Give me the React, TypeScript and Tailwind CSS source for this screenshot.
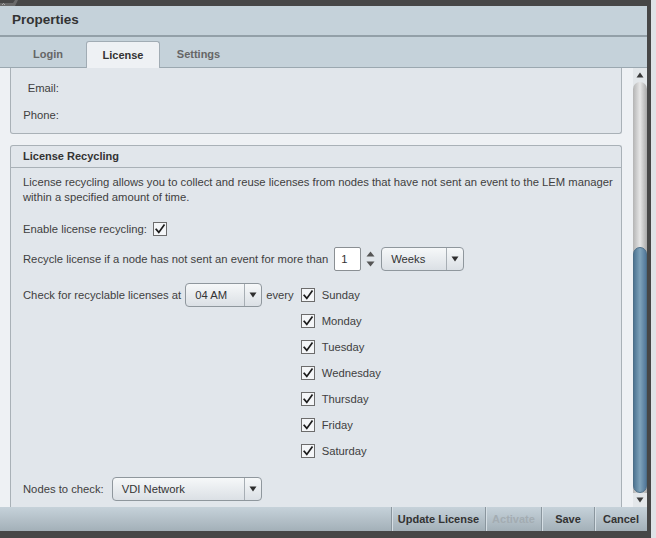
import React from "react";

const Check = () => (
  <div className="w-[14px] h-[14px] border border-[#6c6c6c] bg-[#f4f6f8] flex items-center justify-center shrink-0">
    <svg width="12" height="12" viewBox="0 0 12 12">
      <path d="M2.2 6.4 L4.8 9.4 L10 2.2" fill="none" stroke="#1c1c1c" strokeWidth="1.7" strokeLinecap="square" />
    </svg>
  </div>
);

const Arrow = () => (
  <svg width="8" height="6" viewBox="0 0 8 6">
    <path d="M0.5 0.5 L7.5 0.5 L4 5.5 Z" fill="#2e2e2e" />
  </svg>
);

const Select = ({ text, w }: { text: string; w: string }) => (
  <div
    className={`${w} h-[24px] shrink-0 flex rounded-[4px] border border-[#8f979d] bg-gradient-to-b from-[#f6f8f9] to-[#dbe0e5]`}
  >
    <div className="flex-1 flex items-center pl-[9px] text-[#333]">{text}</div>
    <div className="w-[17px] border-l border-[#a7aeb4] flex items-center justify-center">
      <Arrow />
    </div>
  </div>
);

const days = ["Sunday", "Monday", "Tuesday", "Wednesday", "Thursday", "Friday", "Saturday"];

export default function App() {
  return (
    <div className="w-[656px] h-[538px] bg-[#dfe3e7] flex font-['Liberation_Sans',Arial,sans-serif] text-[11.25px] text-[#404040]">
      <div className="w-[651px] h-full bg-[#474747] flex flex-col pt-[6px] pr-[4px] pb-[7px] relative">
        <svg className="absolute left-0 top-0" width="20" height="6" viewBox="0 0 20 6">
          <path d="M0 3 L13 3 L15 0 L18 0 L15 6 L0 6 Z" fill="#6a6a6a" />
          <path d="M2 5 L3.5 3.5 L5 5" fill="none" stroke="#bdbdbd" strokeWidth="0.8" />
        </svg>
        {/* header */}
        <div className="h-[31px] bg-[#c5d2da] border-b-2 border-[#93a0a8] flex items-center pl-[12px]">
          <span className="text-[13.5px] font-bold text-[#333]">Properties</span>
        </div>
        {/* tabs */}
        <div className="h-[31px] bg-[#c5d2da] border-b border-[#9ba8b0] flex items-end pl-[10px] text-[11px]">
          <div className="w-[76px] h-[27px] flex items-center justify-center font-bold text-[#666] -mb-px">Login</div>
          <div className="w-[74px] h-[27px] -mb-px flex items-center justify-center font-bold text-[#333] bg-[#eef1f4] border border-b-0 border-[#a1acb4] rounded-t-[3px] pt-[1px]">
            License
          </div>
          <div className="w-[77px] h-[27px] flex items-center justify-center font-bold text-[#666] -mb-px">Settings</div>
        </div>
        {/* content */}
        <div className="flex-1 flex bg-[#eef1f4] min-h-0">
          <div className="flex-1 flex flex-col pl-[10px] pr-[11px] min-h-0 overflow-hidden">
            <div className="h-[66px] shrink-0 bg-[#e1e6eb] border-x border-b border-[#a9b1b7] rounded-b-[3px] flex flex-col">
              <div className="h-[16px] mt-[12px] flex items-center">
                <span className="w-[48px] text-right">Email:</span>
              </div>
              <div className="h-[16px] mt-[11px] flex items-center">
                <span className="w-[48px] text-right">Phone:</span>
              </div>
            </div>
            <div className="mt-[11px] flex-1 bg-[#e1e6eb] border-x border-t border-[#a9b1b7] rounded-t-[3px] flex flex-col">
              <div className="h-[22px] shrink-0 border-b border-[#a9b1b7] flex items-center pl-[12px] font-bold text-[11px] text-[#333]">
                License Recycling
              </div>
              <div className="pl-[12px] flex flex-col">
                <p className="pt-[7px] leading-[15px] pr-[4px]">
                  License recycling allows you to collect and reuse licenses from nodes that have not sent an event to the LEM manager within a specified amount of time.
                </p>
                <div className="mt-[16px] h-[16px] flex items-center gap-[6px]">
                  <span>Enable license recycling:</span>
                  <Check />
                </div>
                <div className="mt-[10px] h-[24px] flex items-center">
                  <span>Recycle license if a node has not sent an event for more than</span>
                  <div className="ml-[6px] w-[27px] h-[24px] bg-white border border-[#8a8f93] rounded-[2px] flex items-center pl-[6px] text-[#333]">
                    1
                  </div>
                  <svg className="ml-[5px]" width="9" height="16" viewBox="0 0 9 16">
                    <path d="M0.5 5.5 L8.5 5.5 L4.5 0.5 Z" fill="#555" />
                    <path d="M0.5 10.5 L8.5 10.5 L4.5 15.5 Z" fill="#555" />
                  </svg>
                  <div className="ml-[6px]">
                    <Select text="Weeks" w="w-[83px]" />
                  </div>
                </div>
                <div className="mt-[11px] flex items-start">
                  <div className="h-[26px] flex items-center">
                    <span>Check for recyclable licenses at</span>
                    <div className="ml-[4px]">
                      <Select text="04 AM" w="w-[77px]" />
                    </div>
                    <span className="ml-[4px]">every</span>
                  </div>
                  <div className="ml-[7px] flex flex-col">
                    {days.map((d) => (
                      <div key={d} className="h-[26px] flex items-center gap-[7px]">
                        <Check />
                        <span>{d}</span>
                      </div>
                    ))}
                  </div>
                </div>
                <div className="mt-[13px] h-[24px] flex items-center">
                  <span>Nodes to check:</span>
                  <div className="ml-[8px]">
                    <Select text="VDI Network" w="w-[150px]" />
                  </div>
                </div>
              </div>
            </div>
          </div>
          {/* scrollbar */}
          <div className="w-[14px] flex flex-col bg-[#e3e7ea]">
            <div className="h-[14px] flex items-center justify-center">
              <svg width="8" height="6" viewBox="0 0 8 6">
                <path d="M0.5 5.5 L7.5 5.5 L4 0.5 Z" fill="#3a3a3a" />
              </svg>
            </div>
            <div className="flex-1 flex flex-col rounded-t-[7px] bg-gradient-to-r from-[#b4b4b4] via-[#e6e6e6] to-[#a9a9a9]">
              <div className="h-[165px]" />
              <div className="flex-1 rounded-[7px] border border-[#4d6f88] bg-gradient-to-r from-[#4f7693] via-[#7fa3bb] to-[#52789a]" />
            </div>
            <div className="h-[14px] flex items-center justify-center">
              <svg width="8" height="6" viewBox="0 0 8 6">
                <path d="M0.5 0.5 L7.5 0.5 L4 5.5 Z" fill="#3a3a3a" />
              </svg>
            </div>
          </div>
        </div>
        {/* footer */}
        <div className="h-[24px] flex bg-gradient-to-b from-[#c6d2da] to-[#a3b0b8] font-bold text-[11px] text-[#333]">
          <div className="flex-1" />
          <div className="w-[94px] flex items-center justify-center border-l border-[#8a969e] shadow-[inset_1px_0_0_#d6dfe5]">Update License</div>
          <div className="w-[56px] flex items-center justify-center border-l border-[#8a969e] shadow-[inset_1px_0_0_#d6dfe5] text-[#a3acb2]">Activate</div>
          <div className="w-[53px] flex items-center justify-center border-l border-[#8a969e] shadow-[inset_1px_0_0_#d6dfe5]">Save</div>
          <div className="w-[53px] flex items-center justify-center border-l border-[#8a969e] shadow-[inset_1px_0_0_#d6dfe5]">Cancel</div>
        </div>
      </div>
    </div>
  );
}
